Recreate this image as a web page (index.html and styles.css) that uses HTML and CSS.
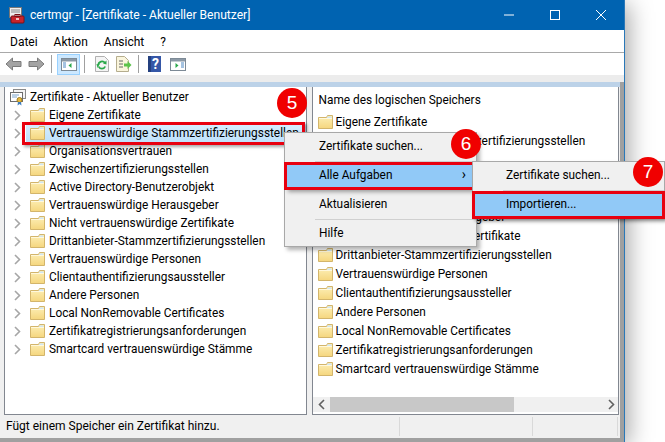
FILE: index.html
```html
<!DOCTYPE html>
<html lang="de">
<head>
  <meta charset="UTF-8">
  <title>certmgr</title>
  <link rel="stylesheet" href="styles.css">
</head>
<body>
  <!-- shared icons -->
  <svg class="defs" width="0" height="0">
    <defs>
      <linearGradient id="folder-fill" x1="0" y1="0" x2="0" y2="1">
        <stop offset="0" stop-color="#fdf0b8"/>
        <stop offset="1" stop-color="#f5d67e"/>
      </linearGradient>
      <symbol id="folder" viewBox="0 0 15 14">
        <path d="M0.5 2.5H8.5L9.5 0.5H14.5V13.5H0.5Z" fill="url(#folder-fill)" stroke="#d3b56b"/>
        <path d="M9.5 1.5H13.5V3H9Z" fill="#cfe6f5"/>
        <path d="M1 3.5H14" stroke="#fff8dc"/>
      </symbol>
      <symbol id="chevron" viewBox="0 0 7 11">
        <path d="M1 1L5.5 5.5L1 10" fill="none" stroke="#a6a6a6" stroke-width="1.6"/>
      </symbol>
      <symbol id="panel" viewBox="0 0 16 13">
        <rect x="0.5" y="0.5" width="15" height="12" fill="#fff" stroke="#7d8a96"/>
        <rect x="1" y="1" width="14" height="2.5" fill="#8c99a6"/>
      </symbol>
    </defs>
  </svg>

  <div class="window">
    <div class="titlebar">
      <svg class="app-icon" width="17" height="17" viewBox="0 0 17 17">
        <rect x="1.5" y="0.5" width="12" height="10" fill="#eee" stroke="#777"/>
        <path d="M3 3H12M3 5H12" stroke="#888"/>
        <rect x="3" y="9" width="13" height="7" rx="1" fill="#c8242c" stroke="#7c1016"/>
        <rect x="7" y="7.5" width="5" height="2" fill="none" stroke="#7c1016"/>
        <rect x="8" y="11" width="3" height="2" fill="#f3c0c0"/>
      </svg>
      <span class="title-text">certmgr - [Zertifikate - Aktueller Benutzer]</span>
      <div class="win-buttons">
        <svg width="10" height="10" viewBox="0 0 10 10"><path d="M0 5H10" stroke="#fff"/></svg>
        <svg width="10" height="10" viewBox="0 0 10 10"><rect x="0.5" y="0.5" width="9" height="9" fill="none" stroke="#fff"/></svg>
        <svg width="10" height="10" viewBox="0 0 10 10"><path d="M0 0L10 10M10 0L0 10" stroke="#fff"/></svg>
      </div>
    </div>

    <div class="menubar">
      <span>Datei</span>
      <span>Aktion</span>
      <span>Ansicht</span>
      <span>?</span>
    </div>

    <div class="toolbar">
      <svg class="tool" width="17" height="14" viewBox="0 0 17 14"><path d="M7.5 1L1 7L7.5 13V9.5H16V4.5H7.5Z" fill="#a4a4a4" stroke="#7b7b7b"/></svg>
      <svg class="tool forward" width="17" height="14" viewBox="0 0 17 14"><path d="M9.5 1L16 7L9.5 13V9.5H1V4.5H9.5Z" fill="#a4a4a4" stroke="#7b7b7b"/></svg>
      <span class="tool-sep first"></span>
      <span class="tool-active">
        <svg width="16" height="13" viewBox="0 0 16 13">
          <use href="#panel"/>
          <path d="M2 5H5M2 7H5M2 9H5" stroke="#4c88c4"/>
          <path d="M10.5 5V10L7.5 7.5Z" fill="#2aa84a"/>
        </svg>
      </span>
      <span class="tool-sep"></span>
      <svg class="tool refresh" width="14" height="16" viewBox="0 0 14 16">
        <path d="M0.5 0.5H9.5L13.5 4.5V15.5H0.5Z" fill="#f4f4f4" stroke="#b0b0b0"/>
        <path d="M10 7A3.6 3.6 0 0 0 3.4 9" fill="none" stroke="#2aa84a" stroke-width="1.8"/>
        <path d="M3.6 10.5A3.6 3.6 0 0 0 10.2 10.5" fill="none" stroke="#2aa84a" stroke-width="1.8"/>
        <path d="M8 7.5L11.5 4.5V8.5Z" fill="#2aa84a"/>
        <path d="M1.5 8L4.5 8.5L2.5 12Z" fill="#2aa84a"/>
      </svg>
      <svg class="tool export" width="16" height="16" viewBox="0 0 16 16">
        <path d="M0.5 0.5H8.5L12.5 4.5V15.5H0.5Z" fill="#faf5dc" stroke="#b5ad8e"/>
        <path d="M3 5H7M3 8H7M3 11H7" stroke="#666"/>
        <path d="M8 7.5H11.5V5L15.5 9L11.5 13V10.5H8Z" fill="#5cc24a"/>
      </svg>
      <span class="tool-sep"></span>
      <svg class="tool help" width="13" height="16" viewBox="0 0 13 16">
        <rect width="13" height="16" fill="#3557a7"/>
        <rect x="0" y="0" width="3" height="16" fill="#24407f"/>
        <text x="7.5" y="13" class="help-mark">?</text>
      </svg>
      <svg class="tool pane-icon" width="16" height="13" viewBox="0 0 16 13">
        <use href="#panel"/>
        <path d="M11 5H14M11 7H14M11 9H14" stroke="#4c88c4"/>
        <path d="M5.5 5V10L8.5 7.5Z" fill="#2aa84a"/>
      </svg>
    </div>

    <div class="gray-strip"></div>

    <div class="client">
      <div class="panes">
        <div class="pane tree">
          <div class="tree-root">
            <svg width="17" height="17" viewBox="0 0 17 17">
              <rect x="3.5" y="0.5" width="12" height="9" fill="#f4f4f4" stroke="#8a8a8a"/>
              <rect x="0.5" y="3.5" width="12" height="9" fill="#fff" stroke="#6c6c6c"/>
              <path d="M2 6H9M2 8H7" stroke="#7ba4cc"/>
              <circle cx="9.5" cy="11" r="2.5" fill="#e8b83c" stroke="#9b7a20"/>
              <path d="M8 13L7.5 16.5L9.5 15L11.5 16.5L11 13Z" fill="#3d7cc0"/>
            </svg>
            <span>Zertifikate - Aktueller Benutzer</span>
          </div>
          <div class="tree-row"><svg class="chev"><use href="#chevron"/></svg><svg class="folder"><use href="#folder"/></svg><span>Eigene Zertifikate</span></div>
          <div class="tree-row selected"><svg class="chev"><use href="#chevron"/></svg><span class="select-fill"><svg class="folder"><use href="#folder"/></svg><span>Vertrauenswürdige Stammzertifizierungsstellen</span></span></div>
          <div class="tree-row"><svg class="chev"><use href="#chevron"/></svg><svg class="folder"><use href="#folder"/></svg><span>Organisationsvertrauen</span></div>
          <div class="tree-row"><svg class="chev"><use href="#chevron"/></svg><svg class="folder"><use href="#folder"/></svg><span>Zwischenzertifizierungsstellen</span></div>
          <div class="tree-row"><svg class="chev"><use href="#chevron"/></svg><svg class="folder"><use href="#folder"/></svg><span>Active Directory-Benutzerobjekt</span></div>
          <div class="tree-row"><svg class="chev"><use href="#chevron"/></svg><svg class="folder"><use href="#folder"/></svg><span>Vertrauenswürdige Herausgeber</span></div>
          <div class="tree-row"><svg class="chev"><use href="#chevron"/></svg><svg class="folder"><use href="#folder"/></svg><span>Nicht vertrauenswürdige Zertifikate</span></div>
          <div class="tree-row"><svg class="chev"><use href="#chevron"/></svg><svg class="folder"><use href="#folder"/></svg><span>Drittanbieter-Stammzertifizierungsstellen</span></div>
          <div class="tree-row"><svg class="chev"><use href="#chevron"/></svg><svg class="folder"><use href="#folder"/></svg><span>Vertrauenswürdige Personen</span></div>
          <div class="tree-row"><svg class="chev"><use href="#chevron"/></svg><svg class="folder"><use href="#folder"/></svg><span>Clientauthentifizierungsaussteller</span></div>
          <div class="tree-row"><svg class="chev"><use href="#chevron"/></svg><svg class="folder"><use href="#folder"/></svg><span>Andere Personen</span></div>
          <div class="tree-row"><svg class="chev"><use href="#chevron"/></svg><svg class="folder"><use href="#folder"/></svg><span>Local NonRemovable Certificates</span></div>
          <div class="tree-row"><svg class="chev"><use href="#chevron"/></svg><svg class="folder"><use href="#folder"/></svg><span>Zertifikatregistrierungsanforderungen</span></div>
          <div class="tree-row"><svg class="chev"><use href="#chevron"/></svg><svg class="folder"><use href="#folder"/></svg><span>Smartcard vertrauenswürdige Stämme</span></div>
        </div>

        <div class="pane list">
          <div class="list-body">
            <div class="list-head">Name des logischen Speichers</div>
            <div class="list-row"><svg class="folder"><use href="#folder"/></svg><span>Eigene Zertifikate</span></div>
            <div class="list-row"><svg class="folder"><use href="#folder"/></svg><span>Vertrauenswürdige Stammzertifizierungsstellen</span></div>
            <div class="list-row"><svg class="folder"><use href="#folder"/></svg><span>Organisationsvertrauen</span></div>
            <div class="list-row"><svg class="folder"><use href="#folder"/></svg><span>Zwischenzertifizierungsstellen</span></div>
            <div class="list-row"><svg class="folder"><use href="#folder"/></svg><span>Active Directory-Benutzerobjekt</span></div>
            <div class="list-row"><svg class="folder"><use href="#folder"/></svg><span>Vertrauenswürdige Herausgeber</span></div>
            <div class="list-row"><svg class="folder"><use href="#folder"/></svg><span>Nicht vertrauenswürdige Zertifikate</span></div>
            <div class="list-row"><svg class="folder"><use href="#folder"/></svg><span>Drittanbieter-Stammzertifizierungsstellen</span></div>
            <div class="list-row"><svg class="folder"><use href="#folder"/></svg><span>Vertrauenswürdige Personen</span></div>
            <div class="list-row"><svg class="folder"><use href="#folder"/></svg><span>Clientauthentifizierungsaussteller</span></div>
            <div class="list-row"><svg class="folder"><use href="#folder"/></svg><span>Andere Personen</span></div>
            <div class="list-row"><svg class="folder"><use href="#folder"/></svg><span>Local NonRemovable Certificates</span></div>
            <div class="list-row"><svg class="folder"><use href="#folder"/></svg><span>Zertifikatregistrierungsanforderungen</span></div>
            <div class="list-row"><svg class="folder"><use href="#folder"/></svg><span>Smartcard vertrauenswürdige Stämme</span></div>
          </div>
          <div class="scrollbar">
            <svg width="7" height="11" viewBox="0 0 7 11"><path d="M6 1L1.5 5.5L6 10" fill="none" stroke="#606060" stroke-width="1.6"/></svg>
            <div class="scroll-track"><div class="scroll-thumb"></div></div>
            <svg width="7" height="11" viewBox="0 0 7 11"><path d="M1 1L5.5 5.5L1 10" fill="none" stroke="#606060" stroke-width="1.6"/></svg>
          </div>
        </div>
      </div>

      <div class="statusbar">
        <span class="status-main">Fügt einem Speicher ein Zertifikat hinzu.</span>
        <span class="status-cell wide"></span>
        <span class="status-cell"></span>
      </div>
    </div>
  </div>

  <!-- context menus and callouts lie over the window -->
  <div class="selection-mark"></div>

  <div class="menu menu-main">
    <div class="menu-item">Zertifikate suchen...</div>
    <div class="menu-line"></div>
    <div class="menu-item active">Alle Aufgaben<span class="arrow">›</span></div>
    <div class="menu-line hidden"></div>
    <div class="menu-item">Aktualisieren</div>
    <div class="menu-line"></div>
    <div class="menu-item">Hilfe</div>
  </div>

  <div class="menu menu-sub">
    <div class="menu-item">Zertifikate suchen...</div>
    <div class="menu-line"></div>
    <div class="menu-item active">Importieren...</div>
  </div>

  <div class="callout c5">5</div>
  <div class="callout c6">6</div>
  <div class="callout c7">7</div>
</body>
</html>
```

FILE: styles.css
```css
/* Reset and global styling */
* {
  margin: 0;
  padding: 0;
  box-sizing: border-box;
}

body {
  position: relative;
  width: 665px;
  height: 442px;
  overflow: hidden;
  background: #fff;
  font-family: Roboto, "Noto Sans", sans-serif;
  font-size: 12px;
  color: #000;
}

.defs {
  position: absolute;
}

/* Window frame */
.window {
  display: flex;
  flex-direction: column;
  width: 625px;
  height: 442px;
  border-right: 1px solid #2a78b8;
  background: #a0a0a0;
  box-shadow: 4px 4px 22px rgba(0, 0, 0, 0.35);
}

.titlebar {
  display: flex;
  align-items: center;
  flex: 0 0 30px;
  padding-left: 8px;
  background: #0063b1;
  color: #fff;
}

.title-text {
  margin-left: 5px;
  font-size: 12.1px;
}

.win-buttons {
  display: flex;
  gap: 36px;
  margin-left: auto;
  margin-right: 18px;
}

.menubar {
  display: flex;
  align-items: center;
  gap: 16px;
  flex: 0 0 23px;
  padding-left: 10px;
  padding-top: 1px;
  background: #fff;
  border-bottom: 1px solid #a9a9a9;
}

/* Toolbar */
.toolbar {
  display: flex;
  align-items: center;
  flex: 0 0 22px;
  padding-left: 5px;
  background: #fff;
}

.forward {
  margin-left: 6px;
}

.tool-sep {
  width: 1px;
  height: 18px;
  margin: 0 4px;
  background: #a0a0a0;
}

.tool-sep.first {
  margin-left: 6px;
}

.tool-active {
  display: flex;
  align-items: center;
  justify-content: center;
  width: 23px;
  height: 21px;
  margin-left: 1px;
  background: #cce8ff;
  border: 1px solid #99d1ff;
}

.refresh {
  margin-left: 6px;
}

.export {
  margin-left: 7px;
  margin-right: 2px;
}

.help {
  margin-left: 5px;
}

.help-mark {
  fill: #fff;
  font-size: 14px;
  font-weight: bold;
  text-anchor: middle;
}

.pane-icon {
  margin-left: 9px;
}

.gray-strip {
  flex: 0 0 7px;
  background: #ececec;
}

/* Main client area */
.client {
  display: flex;
  flex-direction: column;
  height: 356px;
  width: 620px;
  background: #f0f0f0;
}

.panes {
  display: flex;
  gap: 5px;
  height: 333px;
  padding: 5px 1px 0 4px;
  background: linear-gradient(180deg, #bcd2e8 0, #bcd2e8 5px, #f0f0f0 5px);
}

.pane {
  background: #fff;
  border: 1px solid #828790;
  border-top: none;
  font-size: 11.85px;
}

.tree {
  width: 303px;
  padding-top: 1px;
}

.tree-root {
  display: flex;
  align-items: center;
  gap: 3px;
  height: 18px;
  padding-left: 5px;
}

.tree-row {
  display: flex;
  align-items: center;
  height: 18px;
  padding-left: 9px;
}

.chev {
  width: 7px;
  height: 11px;
  flex-shrink: 0;
}

.folder {
  width: 15px;
  height: 14px;
  flex-shrink: 0;
}

.tree-row .folder {
  margin-left: 9px;
  margin-right: 4px;
}

.tree-row span,
.list-row span,
.tree-root span,
.list-head {
  white-space: nowrap;
}

/* selection starts after the expander */
.select-fill {
  display: flex;
  align-items: center;
  align-self: stretch;
  flex: 1;
  min-width: 0;
  overflow: hidden;
  margin-left: 5px;
  background: linear-gradient(180deg, #d6edff, #bfe1fb);
}

.select-fill .folder {
  margin-left: 4px;
}

/* Right hand list */
.list {
  display: flex;
  flex-direction: column;
  width: 308px;
}

.list-body {
  flex: 1;
  padding-left: 5px;
  overflow: hidden;
}

.list-head {
  height: 25px;
  line-height: 26px;
  padding-left: 1px;
}

.list-row {
  display: flex;
  align-items: center;
  gap: 3px;
  height: 19px;
}

.scrollbar {
  display: flex;
  align-items: center;
  justify-content: space-between;
  height: 15px;
  margin-bottom: 2px;
  padding: 0 3px 0 5px;
  background: #f0f0f0;
}

.scroll-track {
  flex: 1;
  height: 15px;
  margin: 0 5px;
}

.scroll-thumb {
  width: 184px;
  height: 15px;
  background: #c8c8c8;
}

/* Status bar */
.statusbar {
  display: flex;
  align-items: center;
  flex: 1;
  padding-left: 6px;
}

.status-main {
  width: 393px;
  height: 19px;
  line-height: 19px;
  white-space: nowrap;
}

.status-cell {
  width: 86px;
  height: 19px;
  border-left: 1px solid #d9d9d9;
  border-right: 1px solid #d9d9d9;
}

.status-cell.wide {
  width: 133px;
  border-right: none;
}

/* Overlays */
.selection-mark {
  position: absolute;
  left: 22px;
  top: 122px;
  width: 283px;
  height: 23px;
  border: 3px solid #e8000f;
  box-shadow: 2px 2px 3px rgba(0, 0, 0, 0.35);
}

.menu {
  position: absolute;
  background: #f0f0f0;
  border: 1px solid #a8a8a8;
  box-shadow: 3px 3px 4px rgba(0, 0, 0, 0.3);
  font-size: 11.85px;
}

.menu-main {
  left: 284px;
  top: 132px;
  width: 193px;
  height: 115px;
  padding-top: 1px;
}

.menu-sub {
  left: 472px;
  top: 161px;
  width: 193px;
  height: 56px;
  padding-top: 1px;
}

.menu-item {
  position: relative;
  height: 26px;
  line-height: 25px;
  padding-left: 34px;
}

.menu-sub .menu-item {
  padding-left: 33px;
}

.menu-line {
  height: 1px;
  margin: 1px 0 1px 30px;
  background: #d0d0d0;
}

.menu-line.hidden {
  background: transparent;
}

.menu-item.active {
  background: #91c9f7;
  outline: 3px solid #e8000f;
  outline-offset: -2px;
  box-shadow: 3px 3px 4px rgba(0, 0, 0, 0.35);
}

.arrow {
  position: absolute;
  right: 10px;
  top: -1px;
  font-size: 14px;
}

.callout {
  position: absolute;
  width: 30px;
  height: 30px;
  border-radius: 50%;
  background: #f00000;
  color: #fff;
  font-family: "Liberation Sans", sans-serif;
  font-size: 19px;
  line-height: 30px;
  text-align: center;
}

.c5 {
  left: 277px;
  top: 88px;
}

.c6 {
  left: 451px;
  top: 129px;
}

.c7 {
  left: 633px;
  top: 157px;
}
```
